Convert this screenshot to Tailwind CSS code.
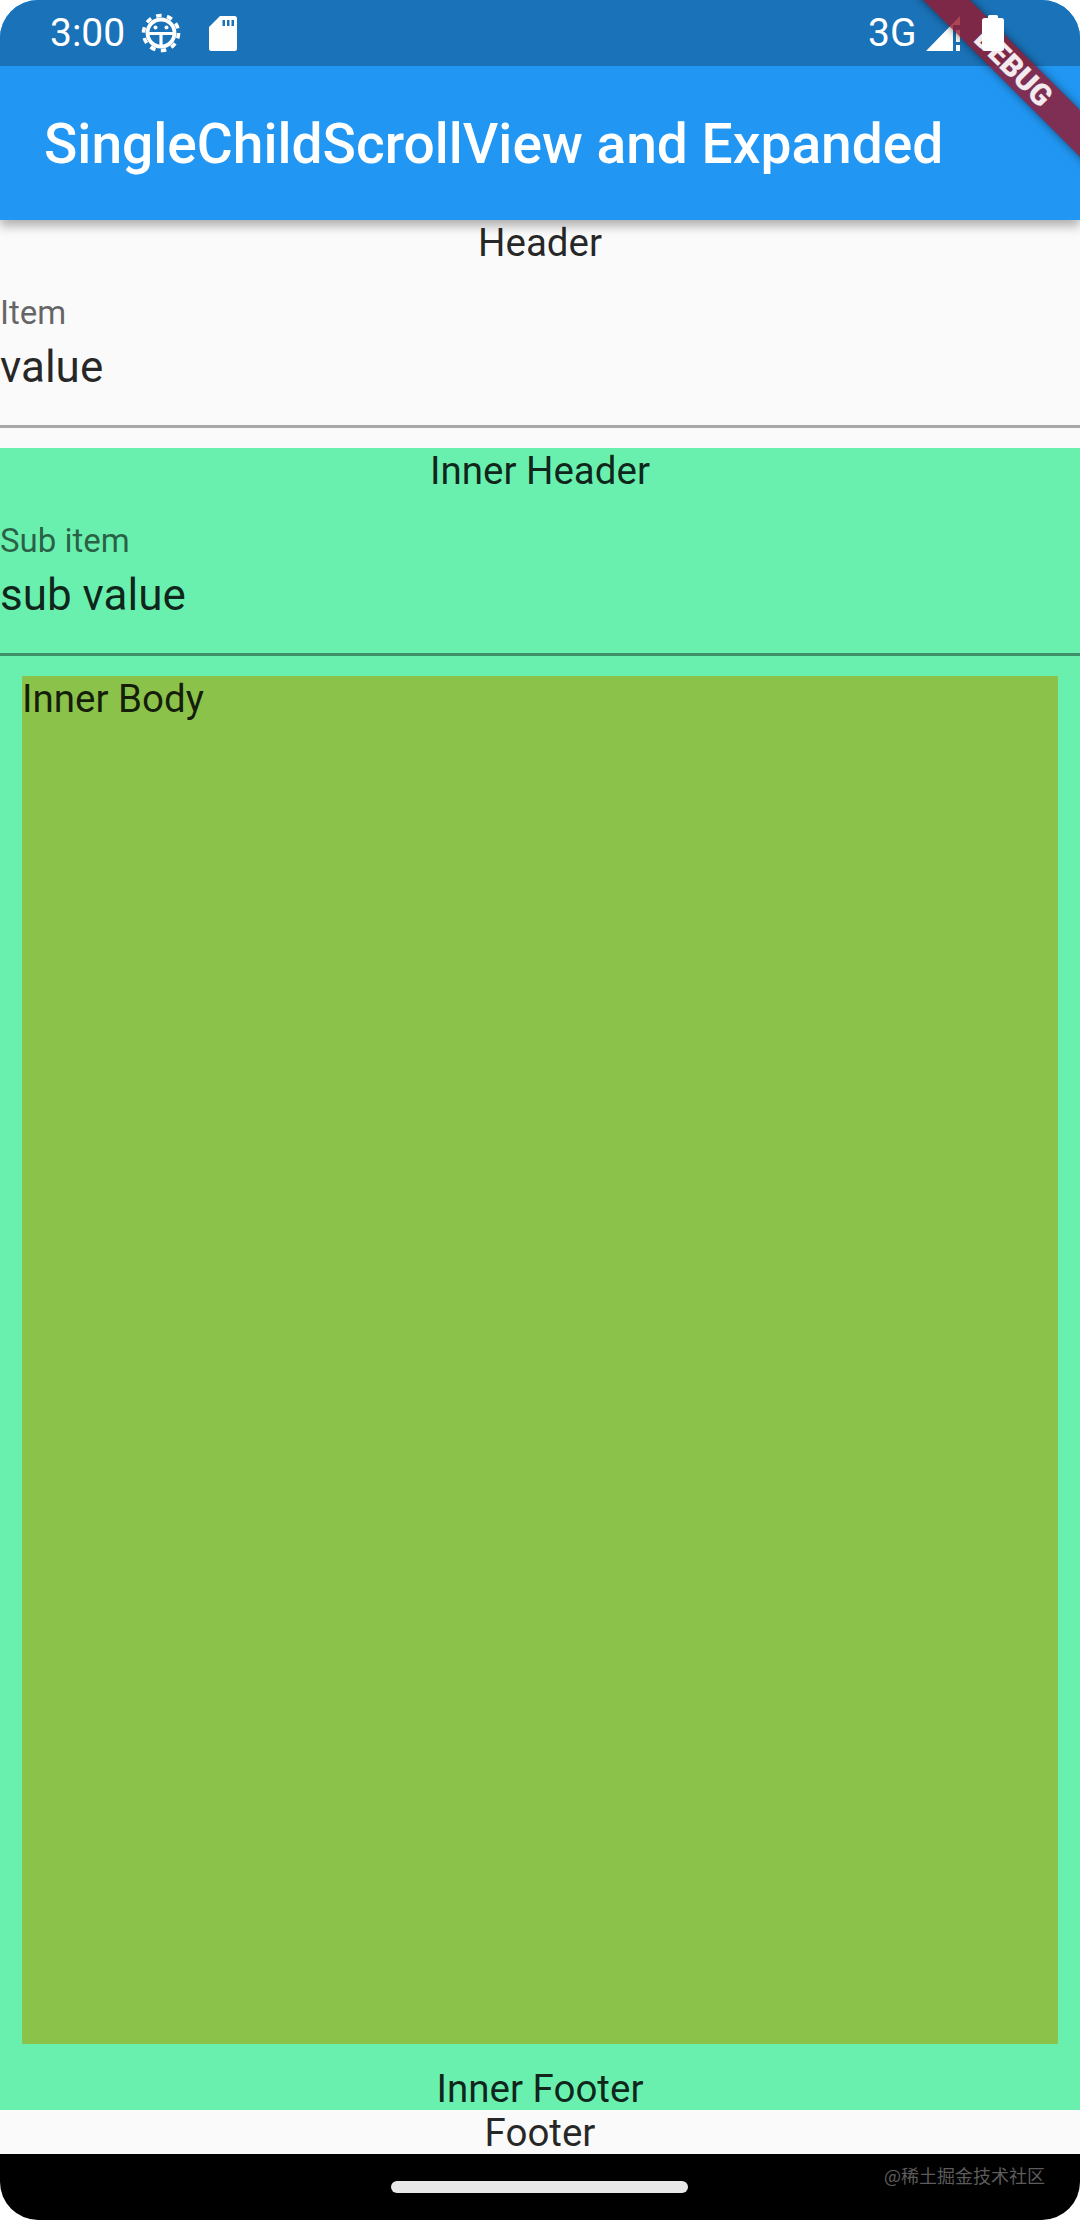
<!DOCTYPE html>
<html lang="en">
<head>
  <meta charset="UTF-8" />
  <meta name="viewport" content="width=device-width, initial-scale=1.0"/>
  <title>SingleChildScrollView and Expanded</title>
  <script src="https://cdn.jsdelivr.net/npm/@tailwindcss/browser@4"></script>
</head>
<body class="bg-white font-['Roboto',sans-serif]">
  <div class="relative w-[1080px] h-[2220px] overflow-hidden rounded-[38px] bg-[#fafafa] flex flex-col text-[38.5px] text-black/85">

    <!-- App bar with status bar -->
    <header class="relative shrink-0 bg-[#2196f3] text-white shadow-[0_6px_10px_rgba(0,0,0,0.3)]">
      <div class="h-[66px] bg-[#1a72b8] flex items-center">
        <span class="ml-[50px] w-[74px] text-[39px] leading-none">3:00</span>
        <!-- debug gear -->
        <svg class="ml-[17px] w-[40px] h-[40px]" viewBox="0 0 40 40" fill="none" stroke="white">
          <circle cx="20" cy="20" r="17.5" stroke-width="3.6" stroke-dasharray="5.500 5.500"/>
          <circle cx="20" cy="20" r="13.500" stroke-width="3.800"/>
          <path d="M6 20.500H34M20 20.500V34" stroke-width="3.200"/>
          <circle cx="14.500" cy="14.500" r="2" fill="white" stroke="none"/>
          <circle cx="25.500" cy="14.500" r="2" fill="white" stroke="none"/>
        </svg>
        <!-- sd card -->
        <svg class="ml-[28px] w-[28px] h-[35px]" viewBox="0 0 28 35">
          <path fill="white" fill-rule="evenodd" d="M11 0H25.500A2.500 2.500 0 0 1 28 2.500V32.500A2.500 2.500 0 0 1 25.500 35H2.500A2.500 2.500 0 0 1 0 32.500V11ZM13.500 4V10H16V4ZM18 4V10H20.500V4ZM22.500 4V10H25V4Z"/>
        </svg>
        <span class="ml-auto w-[50px] text-[39px] leading-none">3G</span>
        <!-- signal, no data -->
        <svg class="ml-[8px] w-[36px] h-[35px]" viewBox="0 0 36 35" fill="white">
          <path d="M34 0V9H27V35H0Z"/>
          <path d="M30 14H34V26H30ZM30 29H34V35H30Z"/>
        </svg>
        <div class="w-[20px]"></div>
        <!-- battery, drawn above the banner -->
        <svg class="relative z-30 w-[22px] h-[36px] mr-[76px]" viewBox="0 0 22 36" fill="white">
          <path d="M6 3V1.500A1.500 1.500 0 0 1 7.500 0H14.500A1.500 1.500 0 0 1 16 1.500V3H19.500A2.500 2.500 0 0 1 22 5.500V33.500A2.500 2.500 0 0 1 19.500 36H2.500A2.500 2.500 0 0 1 0 33.500V5.500A2.500 2.500 0 0 1 2.500 3Z"/>
        </svg>
      </div>
      <div class="h-[154px] flex items-center pl-[44px]">
        <h1 class="text-[55.1px] font-medium leading-none pt-[3px]">SingleChildScrollView and Expanded</h1>
      </div>
    </header>

    <!-- Header -->
    <div class="shrink-0 h-[45px] flex items-center justify-center">Header</div>
    <div class="shrink-0 h-[163px] pt-[28px] border-b-[3px] border-[#a8a8a8] box-border mb-[20px]">
      <div class="h-[40px] flex items-center text-[33px] text-black/60">Item</div>
      <div class="h-[46px] mt-[11px] flex items-center text-[44px]">value</div>
    </div>

    <!-- Inner section -->
    <section class="shrink-0 h-[1662px] bg-[#69f0ae] flex flex-col">
      <div class="shrink-0 h-[45px] flex items-center justify-center">Inner Header</div>
      <div class="shrink-0 h-[163px] pt-[28px] border-b-[3px] border-black/40 box-border mb-[20px]">
        <div class="h-[40px] flex items-center text-[33px] text-black/60">Sub item</div>
        <div class="h-[46px] mt-[11px] flex items-center text-[44px]">sub value</div>
      </div>
      <div class="mx-[22px] h-[1368px] shrink-0 bg-[#8bc34a] leading-[45px]">Inner Body</div>
      <div class="mt-auto h-[44px] pt-[2px] flex items-center justify-center">Inner Footer</div>
    </section>

    <!-- Footer -->
    <div class="shrink-0 h-[44px] pt-[2px] flex items-center justify-center">Footer</div>

    <!-- Navigation bar -->
    <div class="relative flex-1 bg-black">
      <div class="absolute left-[391px] top-[27px] w-[297px] h-[12px] rounded-full bg-[#e8e8e8]"></div>
      <span class="absolute left-[884px] top-[9px] text-[18px] leading-[24px] text-[#5c5c5c] font-['Noto_Sans_CJK_SC',sans-serif]">@稀土掘金技术社区</span>
    </div>

    <!-- Debug banner -->
    <div class="absolute z-20 left-[861px] top-[47.500px] w-[300px] h-[33px] rotate-45 bg-[#96152b]/80 shadow-[0_0_8px_rgba(0,0,0,0.5)] flex items-center justify-center pl-[8px] text-white/90 text-[30px] font-black leading-none">DEBUG</div>
  </div>
</body>
</html>
